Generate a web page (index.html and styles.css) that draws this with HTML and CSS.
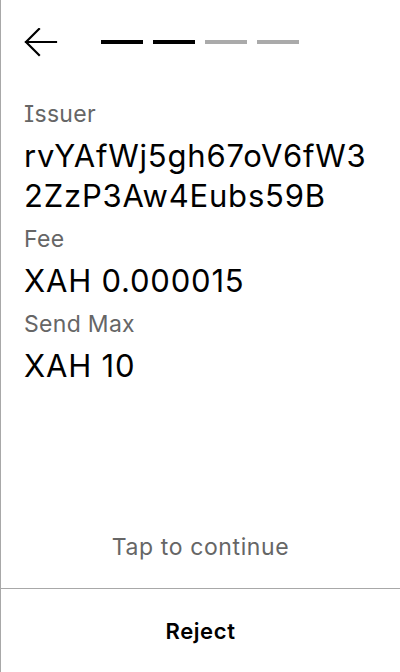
FILE: index.html
```html
<!DOCTYPE html>
<html lang="en">
<head>
<meta charset="utf-8">
<title>Sign transaction</title>
<link rel="stylesheet" href="styles.css">
</head>
<body>
<div class="screen">
  <header class="header">
    <button class="back" aria-label="Back">
      <svg width="34" height="30" viewBox="0 0 34 30" fill="none" stroke="#000" stroke-width="2.2" stroke-linecap="square">
        <path d="M2 14H32"/>
        <path d="M15 1L2 14L15 27"/>
      </svg>
    </button>
    <div class="steps">
      <span class="step done"></span>
      <span class="step done"></span>
      <span class="step"></span>
      <span class="step"></span>
    </div>
  </header>
  <main class="fields">
    <div class="field">
      <div class="label">Issuer</div>
      <div class="value">rvYAfWj5gh67oV6fW3<br>2ZzP3Aw4Eubs59B</div>
    </div>
    <div class="field">
      <div class="label">Fee</div>
      <div class="value">XAH 0.000015</div>
    </div>
    <div class="field">
      <div class="label">Send Max</div>
      <div class="value">XAH 10</div>
    </div>
  </main>
  <div class="tap">Tap to continue</div>
  <footer class="footer">
    <button class="reject">Reject</button>
  </footer>
</div>
</body>
</html>
```
FILE: styles.css
```css
* { box-sizing: border-box; }
html, body {
  margin: 0;
  padding: 0;
  background: #fff;
}
body {
  font-family: Inter, "Noto Sans", sans-serif;
  color: #000;
}
.screen {
  width: 400px;
  height: 672px;
  border-left: 1px solid #a8a8a8;
  display: flex;
  flex-direction: column;
}
.header {
  display: flex;
  align-items: center;
  height: 86px;
  padding-left: 23px;
  gap: 43px;
}
.back {
  border: 0;
  background: none;
  padding: 0;
  width: 34px;
  height: 30px;
  display: flex;
}
.steps {
  display: flex;
  gap: 10px;
  margin-top: -2px;
}
.step {
  display: block;
  width: 42px;
  height: 4px;
  background: #aaaaaa;
}
.step.done { background: #000; }
.fields {
  display: flex;
  flex-direction: column;
  gap: 9px;
  padding: 14px 23px 0;
}
.field {
  display: flex;
  flex-direction: column;
  gap: 8px;
}
.label {
  font-size: 23px;
  line-height: 28px;
  letter-spacing: 0.3px;
  color: #666;
  font-feature-settings: "cv08" 1;
}
.value {
  font-size: 31px;
  line-height: 40px;
  letter-spacing: 0.8px;
  color: #000;
}
.tap {
  margin-top: auto;
  text-align: center;
  font-size: 23px;
  line-height: 28px;
  letter-spacing: 0.6px;
  color: #666;
  padding-bottom: 27px;
}
.footer {
  border-top: 1px solid #a8a8a8;
  height: 84px;
  display: flex;
  align-items: center;
  justify-content: center;
}
.reject {
  border: 0;
  background: none;
  font-family: inherit;
  font-size: 22px;
  font-weight: 600;
  letter-spacing: 0.6px;
  color: #000;
  padding: 0;
}
```
